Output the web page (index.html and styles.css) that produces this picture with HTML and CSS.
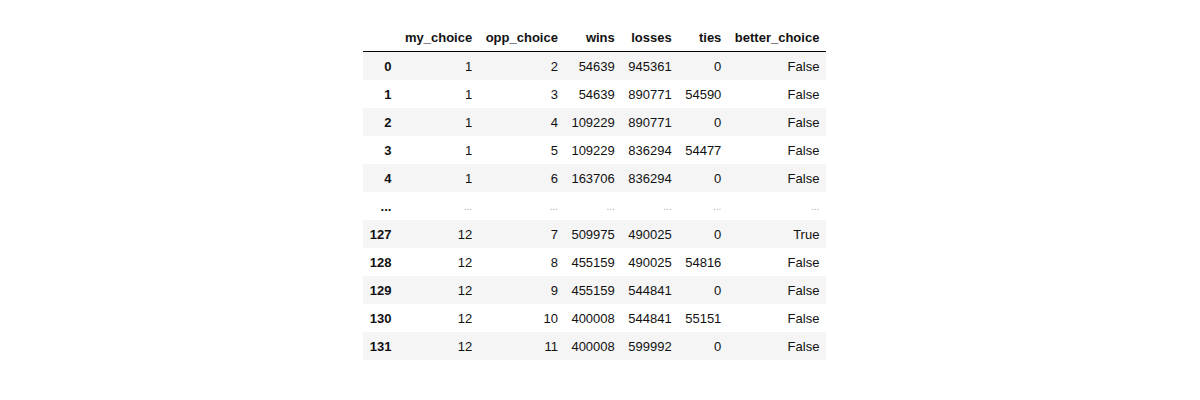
FILE: index.html
```html
<!DOCTYPE html>
<html>
<head>
<meta charset="utf-8">
<link rel="stylesheet" href="styles.css">
</head>
<body>
<div class="wrap">
<table class="df">
  <thead>
    <tr><th></th><th>my_choice</th><th>opp_choice</th><th>wins</th><th>losses</th><th>ties</th><th>better_choice</th></tr>
  </thead>
  <tbody>
    <tr><th>0</th><td>1</td><td>2</td><td>54639</td><td>945361</td><td>0</td><td>False</td></tr>
    <tr><th>1</th><td>1</td><td>3</td><td>54639</td><td>890771</td><td>54590</td><td>False</td></tr>
    <tr><th>2</th><td>1</td><td>4</td><td>109229</td><td>890771</td><td>0</td><td>False</td></tr>
    <tr><th>3</th><td>1</td><td>5</td><td>109229</td><td>836294</td><td>54477</td><td>False</td></tr>
    <tr><th>4</th><td>1</td><td>6</td><td>163706</td><td>836294</td><td>0</td><td>False</td></tr>
    <tr class="dots"><th>...</th><td>...</td><td>...</td><td>...</td><td>...</td><td>...</td><td>...</td></tr>
    <tr><th>127</th><td>12</td><td>7</td><td>509975</td><td>490025</td><td>0</td><td>True</td></tr>
    <tr><th>128</th><td>12</td><td>8</td><td>455159</td><td>490025</td><td>54816</td><td>False</td></tr>
    <tr><th>129</th><td>12</td><td>9</td><td>455159</td><td>544841</td><td>0</td><td>False</td></tr>
    <tr><th>130</th><td>12</td><td>10</td><td>400008</td><td>544841</td><td>55151</td><td>False</td></tr>
    <tr><th>131</th><td>12</td><td>11</td><td>400008</td><td>599992</td><td>0</td><td>False</td></tr>
  </tbody>
</table>
</div>
</body>
</html>
```
FILE: styles.css
```css
html, body {
  margin: 0;
  padding: 0;
  background: #fff;
}
.wrap {
  padding: 23px 0 0 363px;
}
.df {
  border-collapse: collapse;
  border-spacing: 0;
  border: none;
  font-family: "Liberation Sans", Arial, sans-serif;
  font-size: 13px;
  color: #111;
  table-layout: auto;
}
.df th, .df td {
  text-align: right;
  vertical-align: middle;
  padding: 6.5px 6.75px;
  line-height: normal;
  white-space: nowrap;
  max-width: none;
  border: none;
}
.df th {
  font-weight: bold;
}
.df thead {
  border-bottom: 1px solid #000;
  vertical-align: bottom;
}
.df tbody tr:nth-child(odd) {
  background: #f5f5f5;
}
.df .dots td {
  color: #aaa;
  font-size: 10px;
}
```
